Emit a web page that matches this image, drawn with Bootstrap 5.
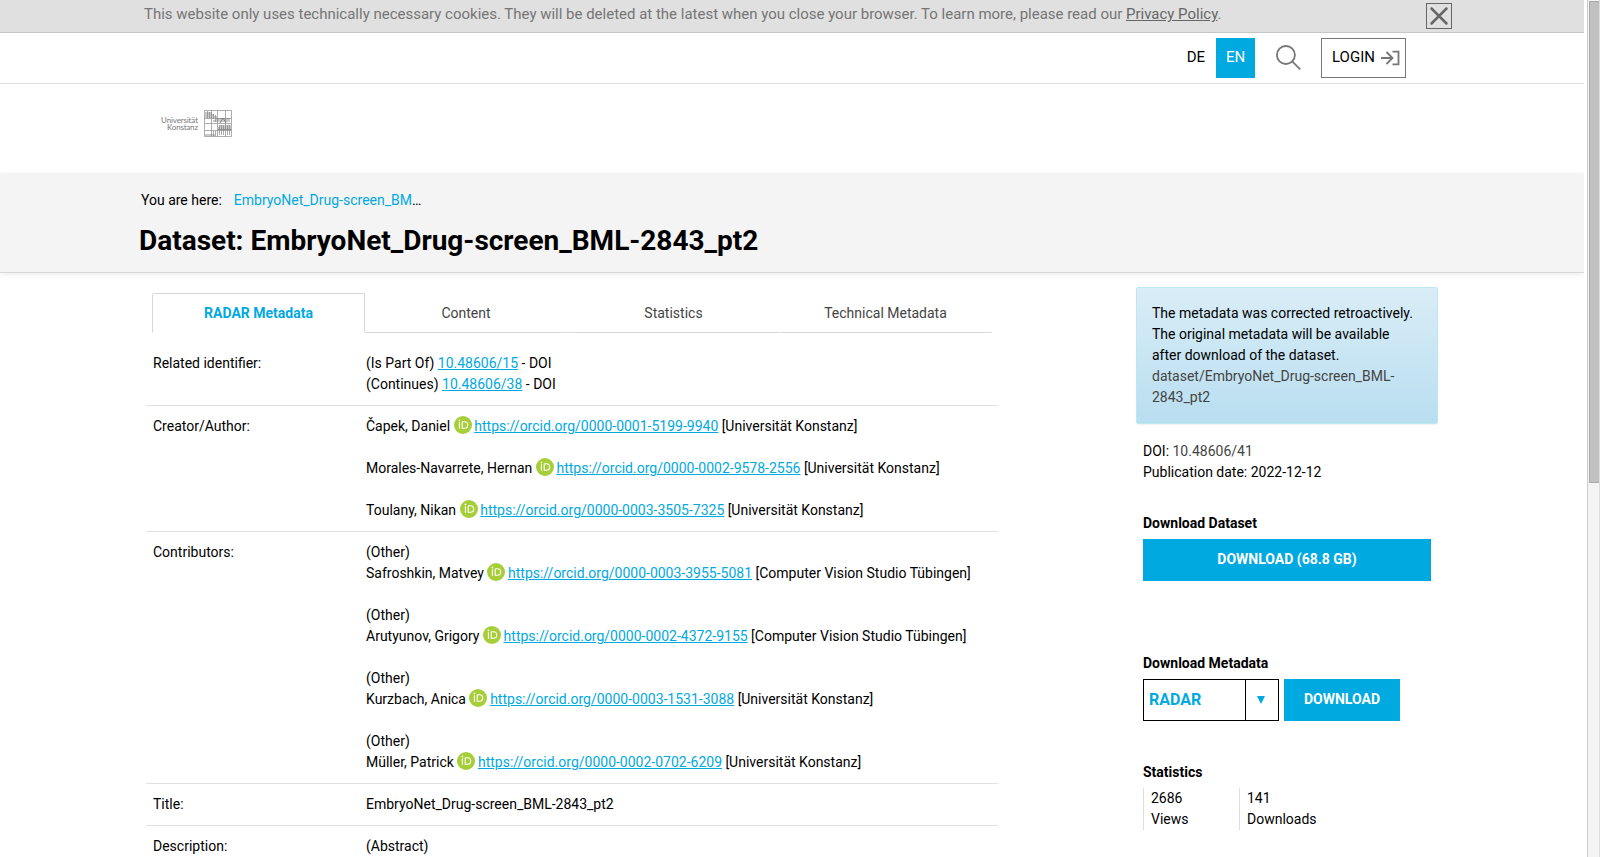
<!DOCTYPE html>
<html lang="en">
<head>
<meta charset="utf-8">
<title>Dataset: EmbryoNet_Drug-screen_BML-2843_pt2</title>
<link href="https://cdn.jsdelivr.net/npm/bootstrap@5.3.0/dist/css/bootstrap.min.css" rel="stylesheet">
<style>
html, body { height: 100%; overflow: hidden; }
body { font: 14px/21px Roboto, sans-serif; color: #000; background: #fff; }
a { color: #00a9e0; }
.page-body { width: 1584px; overflow: hidden; }
.cookie-bar { height: 33px; background: #e0e0e0; border-bottom: 1px solid #c6c6c6; color: #757575; font-size: 14.99px; padding: 3px 132px 0 144px; }
.cookie-text { padding-top: 1px; }
.cookie-bar a { color: #666; }
.close-box { width: 26px; height: 26px; border: 1px solid #666; }
.meta-nav { height: 51px; border-bottom: 1px solid #ddd; padding: 5px 178px 0 0; font-size: 15px; }
.lang { height: 40px; padding: 9px 11px 9px 10px; letter-spacing: -.1px; }
.lang-on { background: #00a9e0; color: #fff; width: 39px; padding-right: 9px; }
.search-icon { margin-left: 20px; }
.login-box { width: 85px; height: 40px; border: 1px solid #767676; padding: 8px 0 0 10px; margin-left: 19px; }
.login-icon { margin: 3px 0 0 6px; }
.brand-bar { height: 89px; padding: 26px 0 0 159px; }
.title-bar { height: 100px; background: #f4f4f4; border-bottom: 1px solid #d8d8d8; box-shadow: 0 2px 6px rgba(0,0,0,.07); padding: 17px 0 0 139px; }
.title-bar h1 { font-size: 28px; line-height: 34px; font-weight: 700; margin: 13px 0 0; }
.crumb { padding-left: 2px; }
.main-col { width: 852px; margin-left: 146px; padding-top: 20px; }
.tab-row { margin: 0 6px 2px; height: 40px; }
.tab-row .nav-link { color: #444; border-radius: 0; padding: 9px 1px 8px 0; border: 1px solid transparent; border-bottom-color: #d8d8d8; margin: 0; height: 40px; }
.tab-row .nav-link.active { color: #00a9e0; font-weight: 700; border-color: #d8d8d8 #d8d8d8 transparent; border-radius: 2px 2px 0 0; padding-right: 0; }
.tab-row .nav-item { flex: 0 0 212px; }
.tab-row .first-tab { flex-basis: 213px; }
.tab-row .content-tab { flex-basis: 203px; }
.meta-row { border-bottom: 1px solid #e0e0e0; padding: 10px 0 10px 7px; }
.meta-row dt { width: 213px; font-weight: 400; flex: none; }
.meta-row dd { margin: 0; white-space: nowrap; }
.orcid { width: 18px; height: 18px; vertical-align: top; margin-right: 2.7px; }
.side-col { width: 302px; margin-left: 138px; padding-top: 14px; }
.notice { height: 137px; border: 1px solid #bce8f1; border-radius: 2px; padding: 15px; background: linear-gradient(#d9edf7, #b9def0); box-shadow: 0 1px 2px rgba(0,0,0,.06); margin: 0; }
.grey-link { color: #444; }
.side-info { padding: 17px 7px 0; }
.side-head { font-weight: 700; height: 21px; margin-bottom: 5px; }
.dataset-head { margin-top: 30px; }
.metadata-head { margin-top: 72px; }
.stats-head { margin-top: 41px; }
.btn-cyan { background: #00a9e0; color: #fff; font-weight: 700; border: 0; border-radius: 0; height: 42px; font-size: 14px; padding: 0 0 2px; }
.metadata-btn { width: 116px; margin-left: 5px; }
.format-select { width: 136px; height: 42px; border: 1px solid #000; color: #00a9e0; font-size: 16px; font-weight: 700; }
.format-name { padding: 0 0 2px 5px; }
.format-arrow { width: 33px; border-left: 1px solid #000; padding-right: 2px; }
.stat-cell { width: 96px; height: 42px; border-left: 1px solid #ddd; padding-left: 7px; }
.scroll-track { width: 16px; padding-left: 3px; background: #fff; }
.scroll-inner { background: #f4f4f4; border-left: 1px solid #ccc; border-right: 1px solid #ddd; padding: 1px 0 0 1px; }
.scroll-thumb { width: 10px; height: 482px; background: #c1c1c1; border-top: 1px solid #aaa; border-bottom: 1px solid #aaa; border-left: 1px solid #aaa; }
</style>
</head>
<body class="d-flex">
<svg width="0" height="0" class="d-none">
  <symbol id="orcid" viewBox="0 0 18 18"><circle cx="9" cy="9" r="9" fill="#a6ce39"/><path d="M5.400 6.200v6.600M8.200 5.700v6.600h2.200c2 0 3.300-1.300 3.300-3.300s-1.300-3.300-3.300-3.300H8.200" fill="none" stroke="#fff" stroke-width="1.1"/><circle cx="5.4" cy="4.4" r=".85" fill="#fff"/></symbol>
</svg>
<div class="page-body flex-shrink-0">
  <div class="cookie-bar d-flex justify-content-between">
    <span class="cookie-text">This website only uses technically necessary cookies. They will be deleted at the latest when you close your browser. To learn more, please read our <a href="#">Privacy Policy</a>.</span>
    <span class="close-box d-flex"><svg width="24" height="24" viewBox="0 0 24 24"><path d="M4.500 4.500l15 15M19.500 4.500l-15 15" stroke="#666" stroke-width="2.500" stroke-linecap="round"/></svg></span>
  </div>
  <nav class="meta-nav d-flex justify-content-end">
    <span class="lang">DE</span>
    <span class="lang lang-on">EN</span>
    <svg class="search-icon" width="27" height="40" viewBox="0 0 27 40" fill="none" stroke="#767676" stroke-width="1.8"><circle cx="10.900" cy="17" r="9"/><path d="M17.200 23.300l8 8"/></svg>
    <a href="#" class="login-box d-flex text-black text-decoration-none"><span>LOGIN</span><svg class="login-icon" width="19" height="16" viewBox="0 0 19 16" fill="none" stroke="#767676" stroke-width="1.800"><path d="M0 8h11M5.500 2l6 6-6 6M11.500 1.600h6v12.800h-6"/></svg></a>
  </nav>
  <header class="brand-bar">
    <svg width="76" height="28" viewBox="0 0 76 28">
      <g font-family="Lato, sans-serif" font-size="8" fill="#777" text-anchor="end"><text x="39" y="12.800" textLength="37">Universität</text><text x="39" y="20.300" textLength="31">Konstanz</text></g>
      <g fill="none" stroke="#999" stroke-width=".8"><path d="M45.500.5h27v26h-27zM52.500.5v26M58.500.5v26M66.500.5v26M45.500 8.500h27M45.500 13.500h27M45.500 20.500h27"/><path d="M46 3h7M46 5h9M46 7h12M57 9h14M54 11h17M60 16h12M59 18h13M59 19.500h13M64 8l-3 5M64 8l3 5M46 25h10" stroke="#777"/><path d="M60.500 15v10M62.500 15v10M64.500 15v10M68.500 15v10M70.500 15v10M54.500 21v5M56.500 21v5M48.500 1v7M50.500 2v6M54.500 4v5M56.500 5v7" stroke="#888" stroke-width=".7"/></g>
    </svg>
  </header>
  <section class="title-bar">
    <div class="crumb d-flex"><span>You are here:</span><span class="ms-2 ps-1"><a href="#" class="text-decoration-none">EmbryoNet_Drug-screen_BM</a>…</span></div>
    <h1>Dataset: EmbryoNet_Drug-screen_BML-2843_pt2</h1>
  </section>
  <main class="d-flex">
    <div class="main-col">
      <ul class="nav tab-row flex-nowrap text-center">
        <li class="nav-item first-tab"><a class="nav-link active" href="#">RADAR Metadata</a></li>
        <li class="nav-item content-tab"><a class="nav-link" href="#">Content</a></li>
        <li class="nav-item"><a class="nav-link" href="#">Statistics</a></li>
        <li class="nav-item"><a class="nav-link" href="#">Technical Metadata</a></li>
      </ul>
      <dl class="mb-0 pt-2">
        <div class="meta-row d-flex"><dt>Related identifier:</dt><dd>(Is Part Of) <a href="#">10.48606/15</a> - DOI<br>(Continues) <a href="#">10.48606/38</a> - DOI</dd></div>
        <div class="meta-row d-flex"><dt>Creator/Author:</dt><dd>Čapek, Daniel <svg class="orcid"><use href="#orcid"/></svg><a href="#">https://orcid.org/0000-0001-5199-9940</a> [Universität Konstanz]<br><br>Morales-Navarrete, Hernan <svg class="orcid"><use href="#orcid"/></svg><a href="#">https://orcid.org/0000-0002-9578-2556</a> [Universität Konstanz]<br><br>Toulany, Nikan <svg class="orcid"><use href="#orcid"/></svg><a href="#">https://orcid.org/0000-0003-3505-7325</a> [Universität Konstanz]</dd></div>
        <div class="meta-row d-flex"><dt>Contributors:</dt><dd>(Other)<br>Safroshkin, Matvey <svg class="orcid"><use href="#orcid"/></svg><a href="#">https://orcid.org/0000-0003-3955-5081</a> [Computer Vision Studio Tübingen]<br><br>(Other)<br>Arutyunov, Grigory <svg class="orcid"><use href="#orcid"/></svg><a href="#">https://orcid.org/0000-0002-4372-9155</a> [Computer Vision Studio Tübingen]<br><br>(Other)<br>Kurzbach, Anica <svg class="orcid"><use href="#orcid"/></svg><a href="#">https://orcid.org/0000-0003-1531-3088</a> [Universität Konstanz]<br><br>(Other)<br>Müller, Patrick <svg class="orcid"><use href="#orcid"/></svg><a href="#">https://orcid.org/0000-0002-0702-6209</a> [Universität Konstanz]</dd></div>
        <div class="meta-row d-flex"><dt>Title:</dt><dd>EmbryoNet_Drug-screen_BML-2843_pt2</dd></div>
        <div class="meta-row d-flex"><dt>Description:</dt><dd>(Abstract)</dd></div>
      </dl>
    </div>
    <aside class="side-col">
      <div class="alert notice text-black">The metadata was corrected retroactively. The original metadata will be available after download of the dataset. <a href="#" class="grey-link text-decoration-none">dataset/EmbryoNet_Drug-screen_BML-2843_pt2</a></div>
      <div class="side-info">
        <div>DOI: <span class="grey-link">10.48606/41</span></div>
        <div>Publication date: 2022-12-12</div>
        <div class="side-head dataset-head">Download Dataset</div>
        <button class="btn btn-cyan w-100 d-block">DOWNLOAD (68.8 GB)</button>
        <div class="side-head metadata-head">Download Metadata</div>
        <div class="d-flex">
          <div class="format-select d-flex align-items-stretch"><span class="format-name flex-grow-1 d-flex align-items-center">RADAR</span><span class="format-arrow d-flex align-items-center justify-content-center"><svg width="8" height="8" viewBox="0 0 8 8"><path d="M0 0h8L4 8z" fill="#00a9e0"/></svg></span></div>
          <button class="btn btn-cyan metadata-btn">DOWNLOAD</button>
        </div>
        <div class="side-head stats-head">Statistics</div>
        <div class="d-flex"><div class="stat-cell">2686<br>Views</div><div class="stat-cell">141<br>Downloads</div></div>
      </div>
    </aside>
  </main>
</div>
<div class="scroll-track flex-shrink-0 h-100"><div class="scroll-inner h-100"><div class="scroll-thumb"></div></div></div>
<script src="https://cdn.jsdelivr.net/npm/bootstrap@5.3.0/dist/js/bootstrap.bundle.min.js"></script>
</body>
</html>
